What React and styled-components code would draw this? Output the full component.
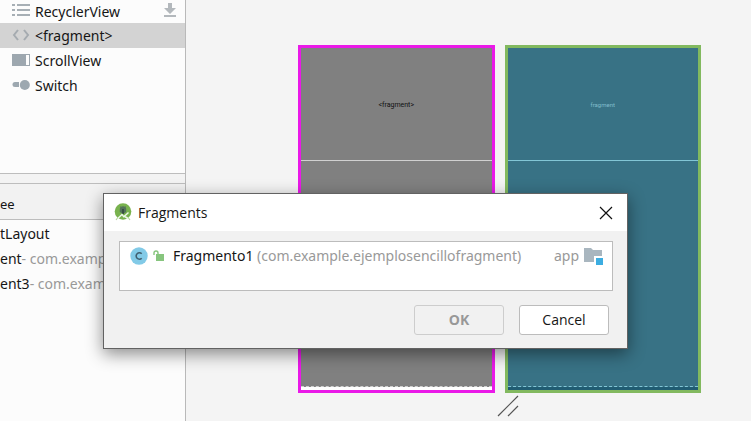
import React from "react";
import styled, { createGlobalStyle } from "styled-components";

const GlobalStyle = createGlobalStyle`
  * { box-sizing: border-box; }
  body {
    margin: 0;
    background: #f4f4f4;
    color: #161616;
    font-family: "Open Sans", "Noto Sans", sans-serif;
    font-size: 14px;
    line-height: 24px;
  }
  ul { list-style: none; margin: 0; padding: 0; }
  button { font: inherit; color: inherit; }
  svg { display: block; flex: none; }
`;

const Workspace = styled.main`
  position: relative;
  display: flex;
  min-height: 100vh;
  overflow: hidden;
`;

const Sidebar = styled.aside`
  display: flex;
  flex-direction: column;
  flex: 0 0 186px;
  background: #fcfcfc;
  border-right: 1px solid #b9b9b9;
  font-family: "Noto Sans", "Open Sans", sans-serif;
`;

const Palette = styled.ul`
  height: 174px;
  border-bottom: 1px solid #bdbdbd;
`;

const PaletteItem = styled.li`
  display: flex;
  align-items: center;
  gap: 5px;
  height: ${(p) => (p.$first ? 23 : 25)}px;
  padding: 0 8px 0 12px;
  background: ${(p) => (p.$selected ? "#d3d3d3" : "transparent")};
`;

const ItemLabel = styled.span`
  flex: 1;
  padding-top: 1px;
  white-space: nowrap;
`;

const Splitter = styled.div`
  height: 9px;
  background: #f3f3f3;
`;

const TreeHeader = styled.h2`
  height: 37px;
  margin: 0;
  padding-top: 8px;
  font-size: 13px;
  font-weight: 400;
  background: #f2f2f2;
  border: solid #bdbdbd;
  border-width: 1px 0;
`;

const Tree = styled.ul`
  padding-top: 2px;
  overflow: hidden;
`;

const TreeItem = styled.li`
  height: 25px;
  white-space: nowrap;
`;

const Muted = styled.span`
  color: #999;
`;

const Surface = styled.section`
  flex: 1;
  padding: 45px 50px 0 112px;
`;

const Devices = styled.div`
  display: grid;
  grid-template-columns: 1fr 1fr;
  gap: 10px;
`;

const Device = styled.div`
  display: flex;
  flex-direction: column;
  height: 348px;
  border: 3px solid ${(p) => (p.$blueprint ? "#82b95f" : "#ea19e8")};
  background: ${(p) => (p.$blueprint ? "#387285" : "#808080")};
  color: ${(p) => (p.$blueprint ? "#80bccb" : "#111")};
  font-family: Roboto, sans-serif;
  font-size: ${(p) => (p.$blueprint ? 6 : 7)}px;
  line-height: 8px;
  text-align: center;
`;

const FragmentSlot = styled.div`
  height: ${(p) => (p.$top ? 113 : 226)}px;
  padding-top: 53px;
  border-bottom: 1px ${(p) => (p.$top ? "solid" : "dashed")} ${(p) => (p.$blueprint ? "#82c6d6" : "#d0d0d0")};
`;

const DeviceFoot = styled.div`
  flex: 1;
  background: ${(p) => (p.$blueprint ? "#205c72" : "#fff")};
`;

const ResizeHandle = styled.div`
  display: flex;
  justify-content: center;
  padding: 2px 0 0 17px;
`;

const Dialog = styled.section`
  position: absolute;
  top: 193px;
  left: 103px;
  right: 123px;
  background: #f1f1f1;
  border: 1px solid #626262;
  box-shadow: 0 5px 16px rgba(0, 0, 0, 0.45);
`;

const TitleBar = styled.header`
  display: flex;
  align-items: center;
  gap: 6px;
  height: 37px;
  padding: 0 14px 0 10px;
  background: #fff;
`;

const Title = styled.h1`
  flex: 1;
  margin: 0;
  font-size: 14px;
  font-weight: 400;
`;

const CloseButton = styled.button`
  padding: 0;
  border: 0;
  background: none;
`;

const ResultList = styled.ul`
  height: 50px;
  margin: 10px 14px 0 15px;
  border: 1px solid #bcbcbc;
  background: #fff;
  font-family: "Noto Sans", "Open Sans", sans-serif;
`;

const Result = styled.li`
  display: flex;
  align-items: center;
  height: 27px;
  padding: 0 8px 0 10px;
  gap: 5px;
  white-space: nowrap;
`;

const ResultName = styled.span`
  flex: 1;
  padding-left: 4px;
`;

const Actions = styled.footer`
  display: flex;
  justify-content: flex-end;
  gap: 15px;
  padding: 14px 18px 13px;
`;

const ActionButton = styled.button`
  width: 90px;
  height: 30px;
  padding: 0;
  border: 1px solid #bcbcbc;
  border-radius: 3px;
  background: #fff;

  &:disabled {
    border-color: #cdcdcd;
    background: #f1f1f1;
    color: #989898;
    font-weight: 700;
  }
`;

const ListIcon = () => (
  <svg width="18" height="17" viewBox="0 0 18 17" fill="#a7afb5">
    <path d="M0 1h3v2H0zM5 1h13v2H5zM0 6h3v2H0zM5 6h13v2H5zM0 11h3v2H0zM5 11h13v2H5z" />
  </svg>
);

const TagIcon = () => (
  <svg width="18" height="17" viewBox="0 0 18 17" fill="none" stroke="#a5abb0" strokeWidth="2">
    <path d="M6 3L2 8l4 5M12 3l4 5-4 5" />
  </svg>
);

const ScrollIcon = () => (
  <svg width="18" height="17" viewBox="0 0 18 17">
    <path fill="#9da7af" d="M0 2h18v12H0z" />
    <path fill="#fcfcfc" d="M14 3h3v10h-3z" />
  </svg>
);

const SwitchIcon = () => (
  <svg width="18" height="17" viewBox="0 0 18 17" fill="#9da8b0">
    <path d="M3 5h4v5H3a2.5 2.5 0 0 1 0-5z" />
    <circle cx="12.8" cy="8" r="5" />
  </svg>
);

const DownloadIcon = () => (
  <svg width="14" height="17" viewBox="0 0 14 17" fill="#b3b8bc">
    <path d="M5 0h4v5h4l-6 6-6-6h4zM1 12h12v2H1z" />
  </svg>
);

const StudioIcon = () => (
  <svg width="18" height="19" viewBox="0 0 18 19">
    <circle cx="9" cy="8.5" r="8.3" fill="#78b24e" />
    <path d="M5.8 6.5a3.2 3.2 0 0 1 6.4 0v2.4L9 11 5.8 8.9z" fill="#53735a" />
    <path d="M6.5 3.5l1 1.5M11.5 3.5L10.5 5" stroke="#53735a" />
    <path d="M9 6v5" stroke="#32483e" strokeWidth="1.6" />
    <path d="M4 15.2l4-3.7 1.8 2.2 4.7-4.2M10 13l4 2.5" stroke="#eef7ea" strokeWidth="1.5" fill="none" />
    <path d="M3.5 15l-1.5 2M14.5 15l1.5 2" stroke="#b8d79f" strokeWidth="1.2" />
  </svg>
);

const CloseIcon = () => (
  <svg width="14" height="14" viewBox="0 0 14 14" fill="none" stroke="#111" strokeWidth="1.2">
    <path d="M1 1l12 12M13 1L1 13" />
  </svg>
);

const ClassIcon = () => (
  <svg width="18" height="18" viewBox="0 0 18 18">
    <circle cx="9" cy="9" r="8.7" fill="#82cae7" />
    <path d="M11.7 6.8A3.2 3.2 0 1 0 11.7 11.2" fill="none" stroke="#405f70" strokeWidth="1.6" />
  </svg>
);

const UnlockIcon = () => (
  <svg width="11" height="12" viewBox="0 0 11 12">
    <path d="M3 4h8v7H3z" fill="#87c57e" />
    <path d="M1 5V3a2 2 0 0 1 4 0v2" fill="none" stroke="#87c57e" strokeWidth="1.4" />
  </svg>
);

const ModuleIcon = () => (
  <svg width="20" height="18" viewBox="0 0 20 18">
    <path d="M0 1h7l2 2h9v12H0z" fill="#a9b6bf" />
    <path d="M10 9h10v9H10z" fill="#fff" />
    <path d="M12 11h7v7h-7z" fill="#3cade1" />
  </svg>
);

const HandleIcon = () => (
  <svg width="22" height="22" viewBox="0 0 22 22" fill="none" stroke="#555" strokeWidth="1.2">
    <path d="M1 21L21 1M11 21L21 11" />
  </svg>
);

const paletteItems = [
  { label: "RecyclerView", Icon: ListIcon, download: true },
  { label: "<fragment>", Icon: TagIcon, selected: true },
  { label: "ScrollView", Icon: ScrollIcon },
  { label: "Switch", Icon: SwitchIcon },
];

export default function App() {
  return (
    <>
      <GlobalStyle />
      <Workspace>
        <Sidebar>
          <Palette>
            {paletteItems.map(({ label, Icon, selected, download }, index) => (
              <PaletteItem key={label} $first={index === 0} $selected={selected}>
                <Icon />
                <ItemLabel>{label}</ItemLabel>
                {download && <DownloadIcon />}
              </PaletteItem>
            ))}
          </Palette>
          <Splitter />
          <TreeHeader>ee</TreeHeader>
          <Tree>
            <TreeItem>tLayout</TreeItem>
            <TreeItem>ent<Muted>- com.example</Muted></TreeItem>
            <TreeItem>ent3<Muted>- com.example</Muted></TreeItem>
          </Tree>
        </Sidebar>
        <Surface>
          <Devices>
            <Device>
              <FragmentSlot $top>&lt;fragment&gt;</FragmentSlot>
              <FragmentSlot />
              <DeviceFoot />
            </Device>
            <Device $blueprint>
              <FragmentSlot $top $blueprint>fragment</FragmentSlot>
              <FragmentSlot $blueprint />
              <DeviceFoot $blueprint />
            </Device>
          </Devices>
          <ResizeHandle><HandleIcon /></ResizeHandle>
        </Surface>
        <Dialog role="dialog" aria-labelledby="dialog-title">
          <TitleBar>
            <StudioIcon />
            <Title id="dialog-title">Fragments</Title>
            <CloseButton aria-label="Close"><CloseIcon /></CloseButton>
          </TitleBar>
          <ResultList>
            <Result>
              <ClassIcon />
              <UnlockIcon />
              <ResultName>
                Fragmento1 <Muted>(com.example.ejemplosencillofragment)</Muted>
              </ResultName>
              <Muted>app</Muted>
              <ModuleIcon />
            </Result>
          </ResultList>
          <Actions>
            <ActionButton disabled>OK</ActionButton>
            <ActionButton>Cancel</ActionButton>
          </Actions>
        </Dialog>
      </Workspace>
    </>
  );
}
